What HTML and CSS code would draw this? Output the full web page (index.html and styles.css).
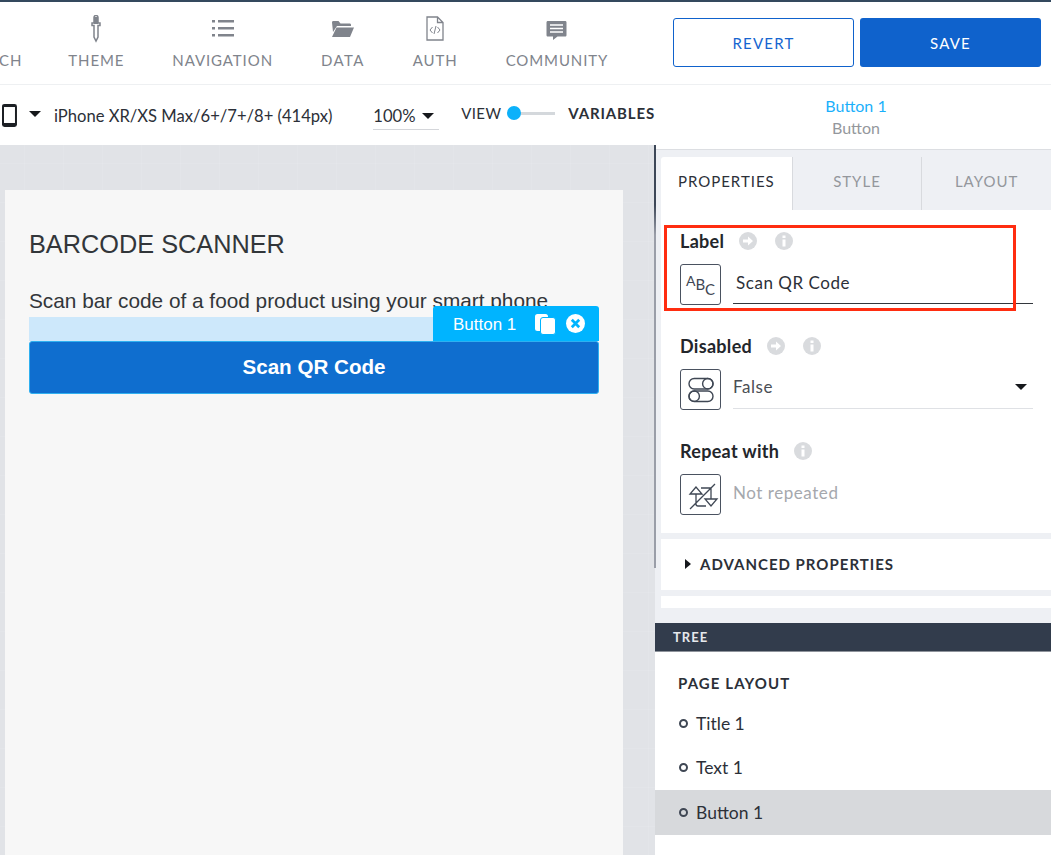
FILE: index.html
```html
<!DOCTYPE html>
<html lang="en">
<head>
  <meta charset="UTF-8" />
  <title>Page Builder</title>
  <link rel="stylesheet" href="styles.css">
</head>
<body>
  <header class="topbar">
    <nav class="tabs">
      <a class="tab tab-cut"><span>CH</span></a>
      <a class="tab">
        <svg width="18" height="28" viewBox="0 0 18 28"><path d="M7 2.500a2 2 0 0 1 4 0V8h2v2.500h-2V22l-2 4-2-4V10.500H5V8h2z" fill="none" stroke="#80848c" stroke-width="1.500"/><path d="M7 2h4v7H7z" fill="#80848c"/></svg>
        <span>THEME</span>
      </a>
      <a class="tab">
        <svg width="22" height="28" viewBox="0 0 22 28"><path d="M0 5h3v2.500H0zM6 5h16v2.500H6zM0 12h3v2.500H0zM6 12h16v2.500H6zM0 19h3v2.500H0zM6 19h16v2.500H6z" fill="#80848c"/></svg>
        <span>NAVIGATION</span>
      </a>
      <a class="tab tab-data">
        <svg width="22" height="28" viewBox="0 0 22 28"><path d="M0 7.500C0 6.500.5 6 1.500 6h5l2 2.500h9c1 0 1.500.5 1.500 1.500v1H5L1 17z M0 22l4.500-9.500H22L18 22z" fill="#80848c"/></svg>
        <span>DATA</span>
      </a>
      <a class="tab">
        <svg width="18" height="28" viewBox="0 0 18 28"><path d="M1 2h10.500L17 7.500v17.500H1zM11.500 2v5.500H17" fill="none" stroke="#80848c" stroke-width="1.300"/><path d="M6.500 12l-2.500 3 2.500 3M11.500 12l2.500 3-2.500 3M10 11l-2 8" fill="none" stroke="#80848c" stroke-width="1"/></svg>
        <span>AUTH</span>
      </a>
      <a class="tab">
        <svg width="22" height="28" viewBox="0 0 22 28"><path d="M2 6h17c1 0 1.500.5 1.500 1.500V20c0 1-.5 1.500-1.500 1.500h-7.500L7 25v-3.500H2C1 21.500.5 21 .5 20V7.500C.5 6.500 1 6 2 6z" fill="#80848c"/><path d="M4 10h13M4 13.500h13M4 17h13" stroke="#fff" stroke-width="1.300"/></svg>
        <span>COMMUNITY</span>
      </a>
    </nav>
    <div class="top-actions">
      <button class="btn btn-outline">REVERT</button>
      <button class="btn btn-solid">SAVE</button>
    </div>
  </header>

  <section class="subbar">
    <div class="device">
      <svg class="phone" width="15" height="23" viewBox="0 0 15 23"><rect x="0" y="0" width="15" height="23" rx="2.500" fill="#1c1f24"/><rect x="2" y="3" width="11" height="16" fill="#fff"/></svg>
      <i class="caret"></i>
      <span class="device-name">iPhone XR/XS Max/6+/7+/8+ (414px)</span>
      <span class="zoom-level">100% <i class="caret"></i></span>
      <span class="view-label">VIEW</span>
      <span class="switch"><i></i></span>
      <span class="var-label">VARIABLES</span>
    </div>
    <div class="selected-name">
      <div class="sel-title">Button 1</div>
      <div class="sel-type">Button</div>
    </div>
  </section>

  <main class="workspace">
    <section class="canvas">
      <div class="screen">
        <h1 class="screen-title">BARCODE SCANNER</h1>
        <p class="screen-text">Scan bar code of a food product using your smart phone</p>
        <div class="selection">
          <div class="sel-band"></div>
          <button class="screen-btn">Scan QR Code</button>
          <div class="sel-tools">
            <span>Button 1</span>
            <svg width="22" height="22" viewBox="0 0 22 22"><rect x="1" y="1" width="13" height="17" rx="2.500" fill="#fff"/><rect x="6.500" y="4.500" width="15" height="17" rx="2.500" fill="#fff" stroke="#00b4ff" stroke-width="1"/></svg>
            <svg width="19" height="19" viewBox="0 0 18 18"><circle cx="9" cy="9" r="9" fill="#fff"/><path d="M5.500 5.500l7 7M12.500 5.500l-7 7" stroke="#00b4ff" stroke-width="2.600"/></svg>
          </div>
        </div>
      </div>
    </section>

    <aside class="panel">
      <div class="panel-top">
        <div class="panel-tabs">
          <div class="ptab ptab-active">PROPERTIES</div>
          <div class="ptab">STYLE</div>
          <div class="ptab">LAYOUT</div>
        </div>
        <div class="props">
          <div class="field">
            <div class="field-label">
              <span>Label</span>
              <svg class="hint" width="18" height="18" viewBox="0 0 18 18"><circle cx="9" cy="9" r="9" fill="#d9dbde"/><path d="M4 7.500h5V4.500L14 9l-5 4.500v-3H4z" fill="#fff"/></svg>
              <svg class="hint" width="18" height="18" viewBox="0 0 18 18"><circle cx="9" cy="9" r="9" fill="#d9dbde"/><path d="M7.500 7.500h3v7h-3zM7.500 3.500h3v2.500h-3z" fill="#fff"/></svg>
            </div>
            <div class="field-row">
              <div class="field-icon abc"><span>A</span><span class="abc-b">B</span><span class="abc-c">C</span></div>
              <div class="field-value value-dark">Scan QR Code</div>
            </div>
          </div>
          <div class="field">
            <div class="field-label">
              <span>Disabled</span>
              <svg class="hint" width="18" height="18" viewBox="0 0 18 18"><circle cx="9" cy="9" r="9" fill="#d9dbde"/><path d="M4 7.500h5V4.500L14 9l-5 4.500v-3H4z" fill="#fff"/></svg>
              <svg class="hint" width="18" height="18" viewBox="0 0 18 18"><circle cx="9" cy="9" r="9" fill="#d9dbde"/><path d="M7.500 7.500h3v7h-3zM7.500 3.500h3v2.500h-3z" fill="#fff"/></svg>
            </div>
            <div class="field-row">
              <div class="field-icon">
                <svg width="26" height="26" viewBox="0 0 26 26" fill="none" stroke="#3f4754" stroke-width="1.400"><rect x="1" y="1.500" width="24" height="10.500" rx="5.200"/><circle cx="19.800" cy="6.700" r="5.200"/><rect x="1" y="14" width="24" height="10.500" rx="5.200"/><circle cx="6.200" cy="19.200" r="5.200"/></svg>
              </div>
              <div class="field-value value-select">False<i class="caret"></i></div>
            </div>
          </div>
          <div class="field">
            <div class="field-label">
              <span>Repeat with</span>
              <svg class="hint" width="18" height="18" viewBox="0 0 18 18"><circle cx="9" cy="9" r="9" fill="#d9dbde"/><path d="M7.500 7.500h3v7h-3zM7.500 3.500h3v2.500h-3z" fill="#fff"/></svg>
            </div>
            <div class="field-row">
              <div class="field-icon">
                <svg width="38" height="38" viewBox="0 0 38 38" fill="none" stroke="#3f4754" stroke-width="1.300"><path d="M14 11l-6 7h12zM14 18v10c0 1.500 1 2 2 2h8M29 12H19M29 12v11M23 23h12l-6 7zM8 33L33 8"/></svg>
              </div>
              <div class="field-value value-select value-empty">Not repeated</div>
            </div>
          </div>
        </div>
        <div class="advanced"><i class="caret-right"></i>ADVANCED PROPERTIES</div>
        <div class="panel-stub"></div>
      </div>

      <div class="tree-head">TREE</div>
      <div class="tree">
        <div class="tree-title">PAGE LAYOUT</div>
        <div class="tree-item"><i></i>Title 1</div>
        <div class="tree-item"><i></i>Text 1</div>
        <div class="tree-item tree-item-on"><i></i>Button 1</div>
      </div>
    </aside>
  </main>

  <div class="callout"></div>
</body>
</html>
```

FILE: styles.css
```css
* {
  box-sizing: border-box;
  margin: 0;
  padding: 0;
}

html, body {
  height: 858px;
  overflow: hidden;
}

body {
  width: 1051px;
  background: #fff;
  font-family: 'Lato', sans-serif;
  color: #2c3038;
  position: relative;
}

/* top bar */
.topbar {
  height: 85px;
  border-top: 2px solid #34495e;
  border-bottom: 1px solid #eef0f2;
  display: flex;
  justify-content: space-between;
}

.tabs {
  display: flex;
  gap: 48px;
  width: 640px;
}

.tab {
  display: flex;
  flex-direction: column;
  align-items: center;
  gap: 8px;
  padding-top: 13px;
  font-size: 15px;
  letter-spacing: 0.9px;
  color: #80848c;
}

.tab-cut {
  padding-top: 49px;
  margin: 0 -2px 0 -1px;
}

.tab-data {
  letter-spacing: 1.4px;
}

.top-actions {
  display: flex;
  gap: 6px;
  padding: 16px 10px 0 0;
}

.btn {
  width: 181px;
  height: 49px;
  border-radius: 3px;
  font-family: 'Lato', sans-serif;
  font-size: 15px;
  letter-spacing: 1.2px;
}

.btn-outline {
  background: #fff;
  border: 1.5px solid #0f62cc;
  color: #1565d0;
}

.btn-solid {
  background: #0f62cc;
  border: none;
  color: #fff;
}

/* second bar */
.subbar {
  height: 60px;
  display: flex;
}

.device {
  width: 655px;
  display: flex;
  align-items: center;
  padding-left: 2px;
  font-size: 16.600px;
}

.caret {
  display: inline-block;
  border-left: 6px solid transparent;
  border-right: 6px solid transparent;
  border-top: 6px solid #16181c;
}

.device .caret {
  margin-left: 12px;
  margin-top: -2px;
}

.device-name {
  margin: 2px 0 0 13px;
  width: 320px;
}

.zoom-level {
  width: 66px;
  height: 29px;
  margin-top: 1px;
  padding-top: 5px;
  border-bottom: 1px solid #d4d6da;
  white-space: nowrap;
}

.zoom-level .caret {
  margin-left: 2px;
  margin-top: 0;
  vertical-align: 3px;
}

.view-label {
  margin-left: 22px;
  font-size: 15px;
  letter-spacing: 0.4px;
  margin-top: -4px;
}

.switch {
  width: 48px;
  height: 3px;
  margin: -4px 0 0 6px;
  background: #d4d8dc;
  position: relative;
  flex-shrink: 0;
}

.switch i {
  position: absolute;
  left: 0;
  top: -5.500px;
  width: 14px;
  height: 14px;
  border-radius: 50%;
  background: #0cb1fa;
}

.var-label {
  margin-left: 13px;
  font-size: 15px;
  font-weight: 700;
  letter-spacing: 0.85px;
  margin-top: -4px;
  white-space: nowrap;
}

.selected-name {
  width: 396px;
  padding: 10px 0 0 6px;
  text-align: center;
  font-size: 16px;
  line-height: 22px;
}

.sel-title {
  color: #1ab0fb;
}

.sel-type {
  color: #94979c;
}

/* canvas */
.workspace {
  display: flex;
  height: 713px;
}

.canvas {
  width: 655px;
  height: 710px;
  background-color: #e1e3e7;
  background-image:
    linear-gradient(rgba(255, 255, 255, 0.08) 1px, transparent 1px),
    linear-gradient(90deg, rgba(255, 255, 255, 0.08) 1px, transparent 1px);
  background-size: 39px 39px;
  background-position: 24px 18px;
  padding: 45px 32px 0 5px;
}

.screen {
  height: 100%;
  background: #f7f7f7;
  padding: 37px 24px 0;
  font-family: 'Liberation Sans', sans-serif;
  color: #32363a;
}

.screen-title {
  font-size: 25.300px;
  font-weight: 400;
  line-height: 34px;
}

.screen-text {
  font-size: 20.800px;
  line-height: 24px;
  margin: 28px 0 4px;
  white-space: nowrap;
}

.selection {
  position: relative;
}

.sel-band {
  height: 24px;
  background: #cde8fb;
}

.screen-btn {
  display: block;
  width: 100%;
  height: 53px;
  padding-bottom: 2px;
  background: #0f6ecf;
  border: 1px solid #2fb0f0;
  border-radius: 3px;
  color: #fff;
  font-family: 'Liberation Sans', sans-serif;
  font-size: 20.600px;
  font-weight: 700;
}

.sel-tools {
  position: absolute;
  right: 0;
  top: -11px;
  width: 166px;
  height: 35px;
  background: #00b4ff;
  border-radius: 3px 3px 0 0;
  display: flex;
  align-items: center;
  padding-left: 20px;
  gap: 10px;
  color: #fff;
  font-size: 17px;
}

.sel-tools span {
  margin: 2px 8px 0 0;
}

/* right panel */
.panel {
  width: 396px;
  display: flex;
  flex-direction: column;
  position: relative;
}

/* dark edge that runs down the seam with the canvas */
.panel::before {
  content: '';
  position: absolute;
  left: -1px;
  top: 0;
  width: 1.500px;
  height: 423px;
  background: linear-gradient(#3d4757, #3d4757 60px, #9a9ea8 90px);
}

.panel-top {
  height: 474px;
  margin-top: 4px;
  padding: 7px 0 0 6px;
  background: #eef0f4;
  border-top: 1px solid #dcdee2;
}

.panel-tabs {
  display: flex;
  height: 53px;
  font-size: 15px;
  letter-spacing: 1px;
}

.ptab {
  width: 130px;
  height: 53px;
  padding-bottom: 6px;
  display: flex;
  align-items: center;
  justify-content: center;
  color: #94979c;
  border-left: 1px solid #d8dade;
}

.ptab:first-child {
  width: 131px;
  border-left: 0;
}

.ptab-active {
  background: #fff;
  color: #2c3038;
  border-radius: 3px 0 0 0;
}

.props {
  background: #fff;
  height: 323px;
  padding: 20px 18px 0 19px;
}

.field {
  height: 105px;
}

.field-label {
  display: flex;
  align-items: center;
  gap: 15px;
  height: 22px;
  font-size: 18px;
  font-weight: 700;
  letter-spacing: 0.3px;
  color: #23262b;
}

.hint + .hint {
  margin-left: 3px;
}

.field-row {
  display: flex;
  gap: 12px;
  margin-top: 12px;
}

.field-icon {
  width: 41px;
  height: 41px;
  flex-shrink: 0;
  border: 1.500px solid #4a5260;
  border-radius: 3px;
  display: flex;
  align-items: center;
  justify-content: center;
  color: #3f4754;
  font-size: 14px;
}

.abc span {
  margin-top: -9px;
}

.abc .abc-b {
  margin-top: -1px;
  font-size: 15px;
}

.abc .abc-c {
  margin-top: 9px;
  font-size: 15px;
}

.field-value {
  flex: 1;
  height: 40px;
  padding-bottom: 2px;
  font-size: 17px;
  letter-spacing: 0.55px;
  display: flex;
  align-items: center;
}

.value-dark {
  padding-left: 3px;
  border-bottom: 1.500px solid #33373d;
  color: #2c3038;
}

.value-select {
  justify-content: space-between;
  padding: 0 6px 4px 0;
  border-bottom: 1.500px solid #dfe1e5;
  color: #4a4e55;
}

.value-empty {
  border-bottom: 0;
  color: #a5a8ad;
}

.advanced {
  background: #fff;
  margin-top: 6px;
  height: 51px;
  display: flex;
  align-items: center;
  padding: 0 0 1px 24px;
  font-size: 15px;
  font-weight: 700;
  letter-spacing: 1px;
  color: #2c3038;
}

.caret-right {
  border-top: 5px solid transparent;
  border-bottom: 5px solid transparent;
  border-left: 6px solid #16181c;
  margin-right: 9px;
}

.panel-stub {
  background: #fff;
  height: 12px;
  margin-top: 6px;
}

.tree-head {
  height: 29px;
  background: #323c4c;
  color: #e6e8ec;
  font-size: 13px;
  font-weight: 700;
  letter-spacing: 1px;
  padding: 6px 0 0 18px;
  border-bottom: 1px solid #8e939b;
}

.tree {
  flex: 1;
  background: #fff;
  padding-top: 22px;
}

.tree-title {
  font-size: 15px;
  font-weight: 700;
  letter-spacing: 1.1px;
  padding-left: 23px;
  height: 25px;
  margin-bottom: 2px;
  color: #2c3038;
}

.tree-item {
  height: 44.500px;
  display: flex;
  align-items: center;
  padding-left: 24px;
  font-size: 17.500px;
  color: #2c3038;
}

.tree-item i {
  width: 9px;
  height: 9px;
  border: 2px solid #3f4754;
  border-radius: 50%;
  margin-right: 8px;
}

.tree-item-on {
  background: #d7d9dc;
}

/* red box drawn on top of the label field */
.callout {
  position: absolute;
  left: 664px;
  top: 225px;
  width: 352px;
  height: 86px;
  border: 3px solid #ff2d10;
}
```
